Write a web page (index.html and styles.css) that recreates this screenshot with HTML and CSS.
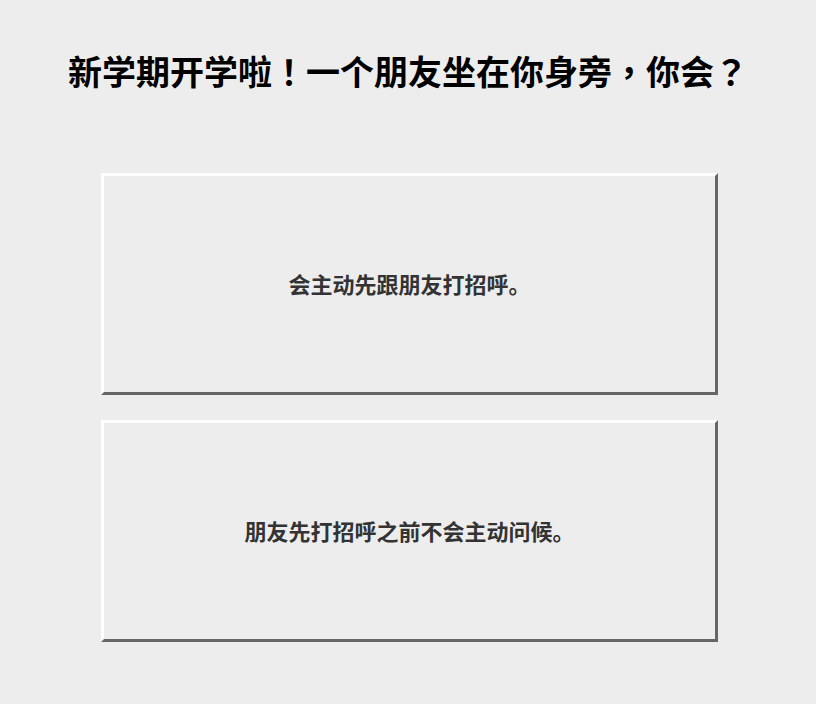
FILE: index.html
```html
<!DOCTYPE html>
<html>
<head>
    <meta charset="utf-8">
    <title>新学期开学啦</title>
    <link rel="stylesheet" href="styles.css">
</head>
<body>
    <div id="quiz">
        <h1 class="question">新学期开学啦<span class="punct">！</span>一个朋友坐在你身旁<span class="punct">，</span>你会<span class="punct">？</span></h1>
        <div class="choices">
            <button class="choice" data-value="a">会主动先跟朋友打招呼。</button>
            <button class="choice" data-value="b">朋友先打招呼之前不会主动问候。</button>
        </div>
    </div>
</body>
</html>
```

FILE: styles.css
```css
body {
    margin: 0;
    padding: 0;
    background-color: #ededed;
    font-family: "Noto Sans CJK SC", "Noto Sans", sans-serif;
}
#quiz {
    display: flex;
    flex-direction: column;
    align-items: center;
    padding-top: 46px;
}
.question {
    margin: 0;
    font-size: 34px;
    line-height: 50px;
    font-weight: bold;
    color: #000000;
}
/* centred full-width punctuation */
.punct {
    font-family: "Noto Sans CJK TC", sans-serif;
}
.choices {
    display: flex;
    flex-direction: column;
    gap: 25px;
    margin-top: 77px;
    padding-left: 3px;
}
.choice {
    width: 617px;
    height: 222px;
    padding-bottom: 4px;
    font-family: inherit;
    font-size: 22px;
    font-weight: bold;
    color: #333333;
    background-color: #ededed;
    border: 3px solid;
    border-color: #ffffff #666666 #666666 #ffffff; /* raised look */
    cursor: pointer;
}
```
